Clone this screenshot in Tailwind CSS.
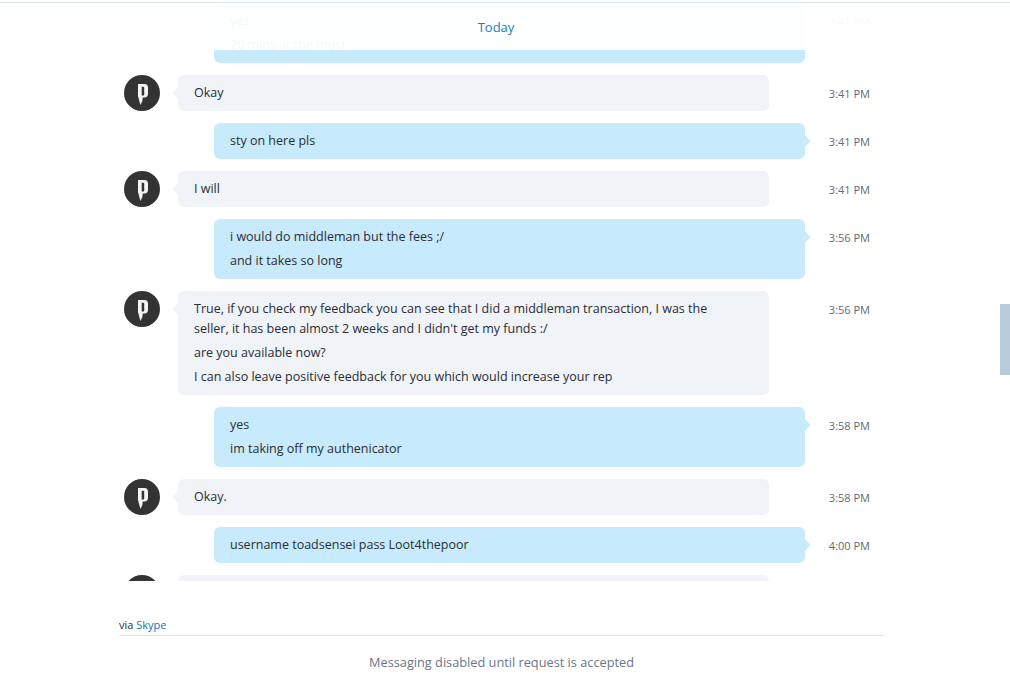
<!DOCTYPE html>
<html lang="en">
<head>
    <meta charset="UTF-8">
    <title>Conversation</title>
    <script src="https://cdn.jsdelivr.net/npm/@tailwindcss/browser@4"></script>
</head>
<body class="bg-white h-[682px] overflow-hidden relative font-['Open_Sans','Noto_Sans',sans-serif] text-[12.5px] leading-5 text-[#2b2c33]">
    <div class="mt-[2px] border-t border-[#d5e5f1] relative">
        <!-- message list, cut off at the bottom -->
        <div class="h-[578px] overflow-hidden flex flex-col gap-3">
            <div class="ml-[124px] w-[746px] flex">
                <div class="ml-[90px] w-[591px] bg-[#c7ebfc] rounded-md px-4 py-2 relative flex flex-col gap-1">
                    <p>yes</p>
                    <p>20 mins at the most</p>
                </div>
                <span class="ml-auto mt-[9px] text-[11px] text-[#5f6b7a]">3:41 PM</span>
            </div>

            <div class="ml-[124px] w-[746px] flex">
                <svg class="w-9 h-9 mr-[18px] shrink-0" viewBox="0 0 36 36"><circle cx="18" cy="18" r="18" fill="#333"/><path fill-rule="evenodd" fill="#f4f4f4" d="M14 9H20.500C22.800 9 24 10.500 24 13V18.500C24 21 22.800 22.500 20.500 22.500H18.800L18.300 26L16.500 30L15.300 26L14 21ZM17.700 11.700V20.500H19.200C19.800 20.500 20.200 20.100 20.200 19.500V12.700C20.200 12.100 19.800 11.700 19.200 11.700Z"/></svg>
                <div class="w-[591px] bg-[#f0f3f8] rounded-md px-4 py-2 relative">
                    <i class="absolute -left-1 top-[14px] w-2 h-2 rotate-45 bg-[#f0f3f8]"></i>
                    <p>Okay</p>
                </div>
                <span class="ml-auto mt-[9px] text-[11px] text-[#5f6b7a]">3:41 PM</span>
            </div>

            <div class="ml-[124px] w-[746px] flex">
                <div class="ml-[90px] w-[591px] bg-[#c7ebfc] rounded-md px-4 py-2 relative">
                    <i class="absolute -right-1 top-[14px] w-2 h-2 rotate-45 bg-[#c7ebfc]"></i>
                    <p>sty on here pls</p>
                </div>
                <span class="ml-auto mt-[9px] text-[11px] text-[#5f6b7a]">3:41 PM</span>
            </div>

            <div class="ml-[124px] w-[746px] flex">
                <svg class="w-9 h-9 mr-[18px] shrink-0" viewBox="0 0 36 36"><circle cx="18" cy="18" r="18" fill="#333"/><path fill-rule="evenodd" fill="#f4f4f4" d="M14 9H20.500C22.800 9 24 10.500 24 13V18.500C24 21 22.800 22.500 20.500 22.500H18.800L18.300 26L16.500 30L15.300 26L14 21ZM17.700 11.700V20.500H19.200C19.800 20.500 20.200 20.100 20.200 19.500V12.700C20.200 12.100 19.800 11.700 19.200 11.700Z"/></svg>
                <div class="w-[591px] bg-[#f0f3f8] rounded-md px-4 py-2 relative">
                    <i class="absolute -left-1 top-[14px] w-2 h-2 rotate-45 bg-[#f0f3f8]"></i>
                    <p>I will</p>
                </div>
                <span class="ml-auto mt-[9px] text-[11px] text-[#5f6b7a]">3:41 PM</span>
            </div>

            <div class="ml-[124px] w-[746px] flex">
                <div class="ml-[90px] w-[591px] bg-[#c7ebfc] rounded-md px-4 py-2 relative flex flex-col gap-1">
                    <i class="absolute -right-1 top-[14px] w-2 h-2 rotate-45 bg-[#c7ebfc]"></i>
                    <p>i would do middleman but the fees ;/</p>
                    <p>and it takes so long</p>
                </div>
                <span class="ml-auto mt-[9px] text-[11px] text-[#5f6b7a]">3:56 PM</span>
            </div>

            <div class="ml-[124px] w-[746px] flex">
                <svg class="w-9 h-9 mr-[18px] shrink-0" viewBox="0 0 36 36"><circle cx="18" cy="18" r="18" fill="#333"/><path fill-rule="evenodd" fill="#f4f4f4" d="M14 9H20.500C22.800 9 24 10.500 24 13V18.500C24 21 22.800 22.500 20.500 22.500H18.800L18.300 26L16.500 30L15.300 26L14 21ZM17.700 11.700V20.500H19.200C19.800 20.500 20.200 20.100 20.200 19.500V12.700C20.200 12.100 19.800 11.700 19.200 11.700Z"/></svg>
                <div class="w-[591px] bg-[#f0f3f8] rounded-md px-4 py-2 relative flex flex-col gap-1">
                    <i class="absolute -left-1 top-[14px] w-2 h-2 rotate-45 bg-[#f0f3f8]"></i>
                    <p class="max-w-[530px]">True, if you check my feedback you can see that I did a middleman transaction, I was the seller, it has been almost 2 weeks and I didn't get my funds :/</p>
                    <p>are you available now?</p>
                    <p>I can also leave positive feedback for you which would increase your rep</p>
                </div>
                <span class="ml-auto mt-[9px] text-[11px] text-[#5f6b7a]">3:56 PM</span>
            </div>

            <div class="ml-[124px] w-[746px] flex">
                <div class="ml-[90px] w-[591px] bg-[#c7ebfc] rounded-md px-4 py-2 relative flex flex-col gap-1">
                    <i class="absolute -right-1 top-[14px] w-2 h-2 rotate-45 bg-[#c7ebfc]"></i>
                    <p>yes</p>
                    <p>im taking off my authenicator</p>
                </div>
                <span class="ml-auto mt-[9px] text-[11px] text-[#5f6b7a]">3:58 PM</span>
            </div>

            <div class="ml-[124px] w-[746px] flex">
                <svg class="w-9 h-9 mr-[18px] shrink-0" viewBox="0 0 36 36"><circle cx="18" cy="18" r="18" fill="#333"/><path fill-rule="evenodd" fill="#f4f4f4" d="M14 9H20.500C22.800 9 24 10.500 24 13V18.500C24 21 22.800 22.500 20.500 22.500H18.800L18.300 26L16.500 30L15.300 26L14 21ZM17.700 11.700V20.500H19.200C19.800 20.500 20.200 20.100 20.200 19.500V12.700C20.200 12.100 19.800 11.700 19.200 11.700Z"/></svg>
                <div class="w-[591px] bg-[#f0f3f8] rounded-md px-4 py-2 relative">
                    <i class="absolute -left-1 top-[14px] w-2 h-2 rotate-45 bg-[#f0f3f8]"></i>
                    <p>Okay.</p>
                </div>
                <span class="ml-auto mt-[9px] text-[11px] text-[#5f6b7a]">3:58 PM</span>
            </div>

            <div class="ml-[124px] w-[746px] flex">
                <div class="ml-[90px] w-[591px] bg-[#c7ebfc] rounded-md px-4 py-2 relative">
                    <i class="absolute -right-1 top-[14px] w-2 h-2 rotate-45 bg-[#c7ebfc]"></i>
                    <p>username toadsensei pass Loot4thepoor</p>
                </div>
                <span class="ml-auto mt-[9px] text-[11px] text-[#5f6b7a]">4:00 PM</span>
            </div>

            <div class="ml-[124px] w-[746px] flex">
                <svg class="w-9 h-9 mr-[18px] shrink-0" viewBox="0 0 36 36"><circle cx="18" cy="18" r="18" fill="#333"/></svg>
                <div class="w-[591px] h-9 bg-[#f0f3f8] rounded-md"></div>
            </div>
        </div>

        <!-- faded header with the date -->
        <div class="absolute top-0 left-0 right-0 h-[47px] bg-white/96 flex justify-center pt-[14px] pr-[18px]">
            <span class="text-[#1a7fc1] text-[13px]">Today</span>
        </div>

        <div class="ml-[119px] w-[765px] h-[55px] flex items-end border-b border-[#dfe6f0] text-[11px] leading-5">
            <span>via <span class="text-[#0f76b5]">Skype</span></span>
        </div>
        <p class="mt-[16px] ml-[119px] w-[765px] text-center text-[12.75px] text-[#6c7688]">Messaging disabled until request is accepted</p>
    </div>

    <!-- scrollbar thumb -->
    <div class="absolute right-0 top-[304px] w-[10px] h-[71px] bg-[#b8cbdc]"></div>
</body>
</html>
